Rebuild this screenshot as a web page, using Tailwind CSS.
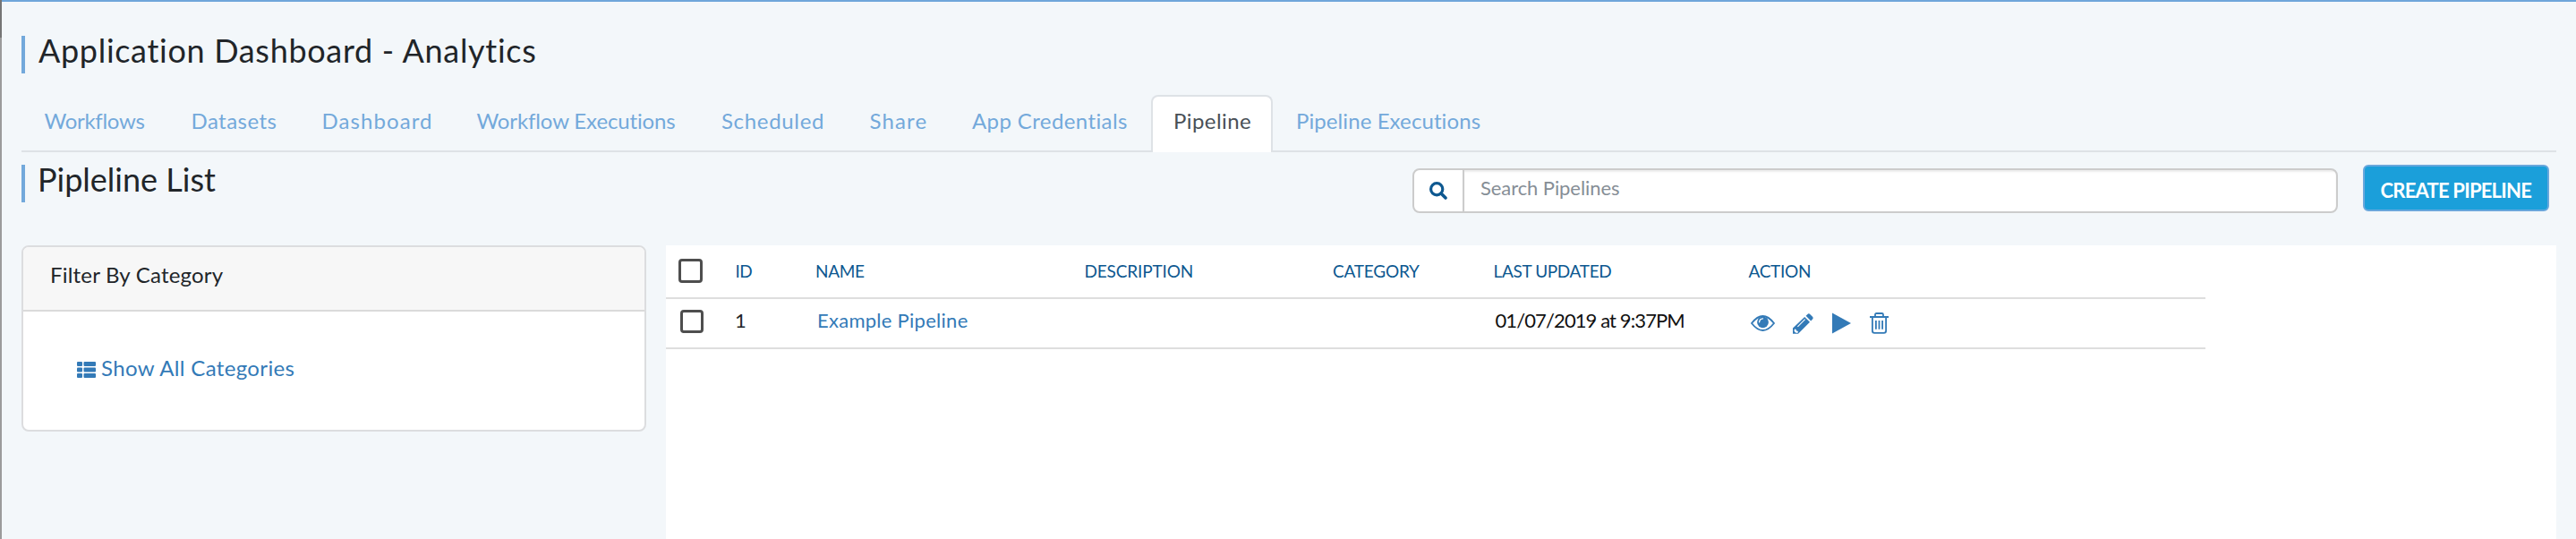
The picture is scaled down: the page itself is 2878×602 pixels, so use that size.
<!DOCTYPE html>
<html lang="en">
<head>
<meta charset="utf-8">
<title>Application Dashboard</title>
<script src="https://cdn.jsdelivr.net/npm/@tailwindcss/browser@4"></script>
</head>
<body class="flex h-[602px] w-[2878px] overflow-hidden bg-[#f3f7fa] font-['Lato',sans-serif] whitespace-nowrap text-[#212529]">
  <div class="flex w-[2px] shrink-0 flex-col">
    <div class="h-[42px] bg-[#757575]"></div>
    <div class="grow bg-[#9b9b9b]"></div>
  </div>
  <main class="flex grow flex-col border-t-2 border-[#6fa6da] pr-[22px] pl-[22px]">
    <header class="mt-[38px] h-[42px] border-l-4 border-[#73a9db] pl-[15px] text-[36px] leading-[33px] tracking-[0.69px]">Application Dashboard - Analytics</header>

    <nav class="mt-6 flex h-16 border-b-2 border-[#dee2e6] text-[24px] text-[#73a9db]">
      <a class="flex h-16 w-[162.5px] items-center pb-[6px] pl-[25.5px] tracking-[-0.3px]">Workflows</a>
      <a class="flex h-16 w-[146px] items-center pb-[6px] pl-[27px] tracking-[0.45px]">Datasets</a>
      <a class="flex h-16 w-[175px] items-center pb-[6px] pl-[27px] tracking-[1.08px]">Dashboard</a>
      <a class="flex h-16 w-[273px] items-center pb-[6px] pl-[25px] tracking-[-0.13px]">Workflow Executions</a>
      <a class="flex h-16 w-[165.5px] items-center pb-[6px] pl-[25.5px] tracking-[0.67px]">Scheduled</a>
      <a class="flex h-16 w-[114.5px] items-center pb-[6px] pl-[25.5px] tracking-[1.15px]">Share</a>
      <a class="flex h-16 w-[225.5px] items-center pb-[6px] pl-[25.5px] tracking-[0.4px]">App Credentials</a>
      <a class="flex h-16 w-[136px] items-center rounded-t-[8px] border-2 border-b-0 border-[#dee2e6] bg-white pb-[8px] pl-[23px] tracking-[0.42px] text-[#495057]">Pipeline</a>
      <a class="flex h-16 items-center pb-[6px] pl-[26px] tracking-[0.09px]">Pipeline Executions</a>
    </nav>

    <section class="mt-[14px] flex h-[90px] items-start">
      <h2 class="h-[42px] w-[1554px] border-l-4 border-[#73a9db] pl-[14px] text-[36px] leading-[33px]">Pipleline List</h2>
      <div class="mt-1 flex h-[50px] w-[1034px] overflow-hidden rounded-[8px] border-2 border-[#ccc] bg-white">
        <div class="flex w-[56px] items-center justify-center border-r-2 border-[#ccc]">
          <svg class="h-5 w-5" viewBox="0 0 20 20" fill="none" stroke="#0d5890"><circle cx="8.2" cy="8.2" r="6.6" stroke-width="3.2"/><path d="M13 13l5 5" stroke-width="3.6" stroke-linecap="round"/></svg>
        </div>
        <div class="flex grow items-center pb-[7px] pl-[18px] text-[22px] tracking-[-0.08px] text-[#868e96] shadow-[inset_0_2px_2px_rgba(0,0,0,0.075)]">Search Pipelines</div>
      </div>
      <button class="ml-7 flex h-[52px] w-[208px] items-center rounded-[6px] border-2 border-[#69a7dc] bg-[#1b9fda] pt-[4px] pl-[17.5px] text-[22px] font-bold tracking-[-0.78px] text-white">CREATE PIPELINE</button>
    </section>

    <section class="flex grow items-start">
      <aside class="h-[208px] w-[698px] overflow-hidden rounded-[8px] border-2 border-[#dcdddf] bg-white text-[24px]">
        <div class="flex h-[72px] items-center border-b-2 border-[#dadada] bg-[#f7f7f7] pb-[8px] pl-[30px] tracking-[0.2px]">Filter By Category</div>
        <div class="flex h-[132px] items-center pb-[6px] pl-[60px] tracking-[0.36px] text-[#337ab7]">
          <svg class="mt-[3px] mr-[6px] h-[18px] w-[21px]" viewBox="0 0 21 18" fill="#337ab7"><rect width="6" height="5" rx="1"/><rect x="7.5" width="13.5" height="5" rx="1"/><rect y="6.5" width="6" height="5" rx="1"/><rect x="7.5" y="6.5" width="13.5" height="5" rx="1"/><rect y="13" width="6" height="5" rx="1"/><rect x="7.5" y="13" width="13.5" height="5" rx="1"/></svg>
          <span>Show All Categories</span>
        </div>
      </aside>

      <div class="ml-[22px] h-full grow bg-white">
        <div class="flex h-[60px] w-[1720px] items-center border-b-2 border-[#dedede] text-[19px] text-[#0d5890]">
          <div class="w-[77.5px] pl-[14px]"><div class="mb-[2px] h-[27px] w-[27px] rounded-[4px] border-3 border-[#4e4e4e] bg-white"></div></div>
          <div class="w-[89.5px] tracking-[-0.5px]">ID</div>
          <div class="w-[300.5px] tracking-[-0.3px]">NAME</div>
          <div class="w-[277.5px] tracking-[-0.16px]">DESCRIPTION</div>
          <div class="w-[179.5px] tracking-[-0.22px]">CATEGORY</div>
          <div class="w-[285px] tracking-[-0.35px]">LAST UPDATED</div>
          <div class="tracking-[-0.3px]">ACTION</div>
        </div>
        <div class="flex h-[56px] w-[1720px] items-center border-b-2 border-[#dedede] text-[22px]">
          <div class="w-[77px] pl-[15.5px]"><div class="mb-[5px] h-[26px] w-[26px] rounded-[4px] border-3 border-[#4e4e4e] bg-white"></div></div>
          <div class="w-[92px] pb-[7px]">1</div>
          <div class="w-[757.5px] pb-[7px] tracking-[0.27px] text-[#337ab7]">Example Pipeline</div>
          <div class="w-[285.5px] pb-[7px] tracking-[-0.9px] text-[#111]">01/07/2019 at 9:37PM</div>
          <div class="flex h-6 items-center">
            <svg class="h-[20px] w-[27px]" viewBox="0 0 27 20"><path d="M1 10Q13.500-6 26 10Q13.500 26 1 10Z" fill="none" stroke="#337ab7" stroke-width="1.800"/><circle cx="13.500" cy="8.800" r="6.400" fill="#337ab7"/><path d="M9.600 8.800q.2-3.600 3.900-3.900" fill="none" stroke="#fff" stroke-width="1.300" stroke-linecap="round"/></svg>
            <svg class="ml-5 h-[23px] w-[23px]" viewBox="0 0 23 23" fill="#337ab7"><path d="M16.200 1.200q1.600-1.700 3.300 0l2.300 2.300q1.700 1.700 0 3.300l-1.600 1.600-5.600-5.600z"/><path d="M13.200 4l5.800 5.800L6 22.800H0v-6.200z"/><path d="M5.400 14.800L13.600 6.600" stroke="#fff" stroke-width="1.100"/><path d="M2.200 17.400l1.500.5.300 1.600 1.600.3.400 1.400-1 .6H3.500l-1.900-1.900v-1.300z" fill="#fff"/></svg>
            <svg class="ml-[21px] h-[24px] w-[21px]" viewBox="0 0 21 24" fill="#337ab7"><path d="M0 0.500L21 12 0 23.500z"/></svg>
            <svg class="ml-[21px] h-[24px] w-[21px]" viewBox="0 0 21 24" fill="none" stroke="#337ab7" stroke-width="1.800"><path d="M0 5h21M6 5V2.500q0-1.500 1.500-1.500h6q1.500 0 1.500 1.500V5M2.900 5v15.500q0 2.300 2.300 2.300h10.600q2.300 0 2.300-2.300V5M6.900 9v9.800M10.500 9v9.800M14.100 9v9.800"/></svg>
          </div>
        </div>
      </div>
    </section>
  </main>
</body>
</html>
